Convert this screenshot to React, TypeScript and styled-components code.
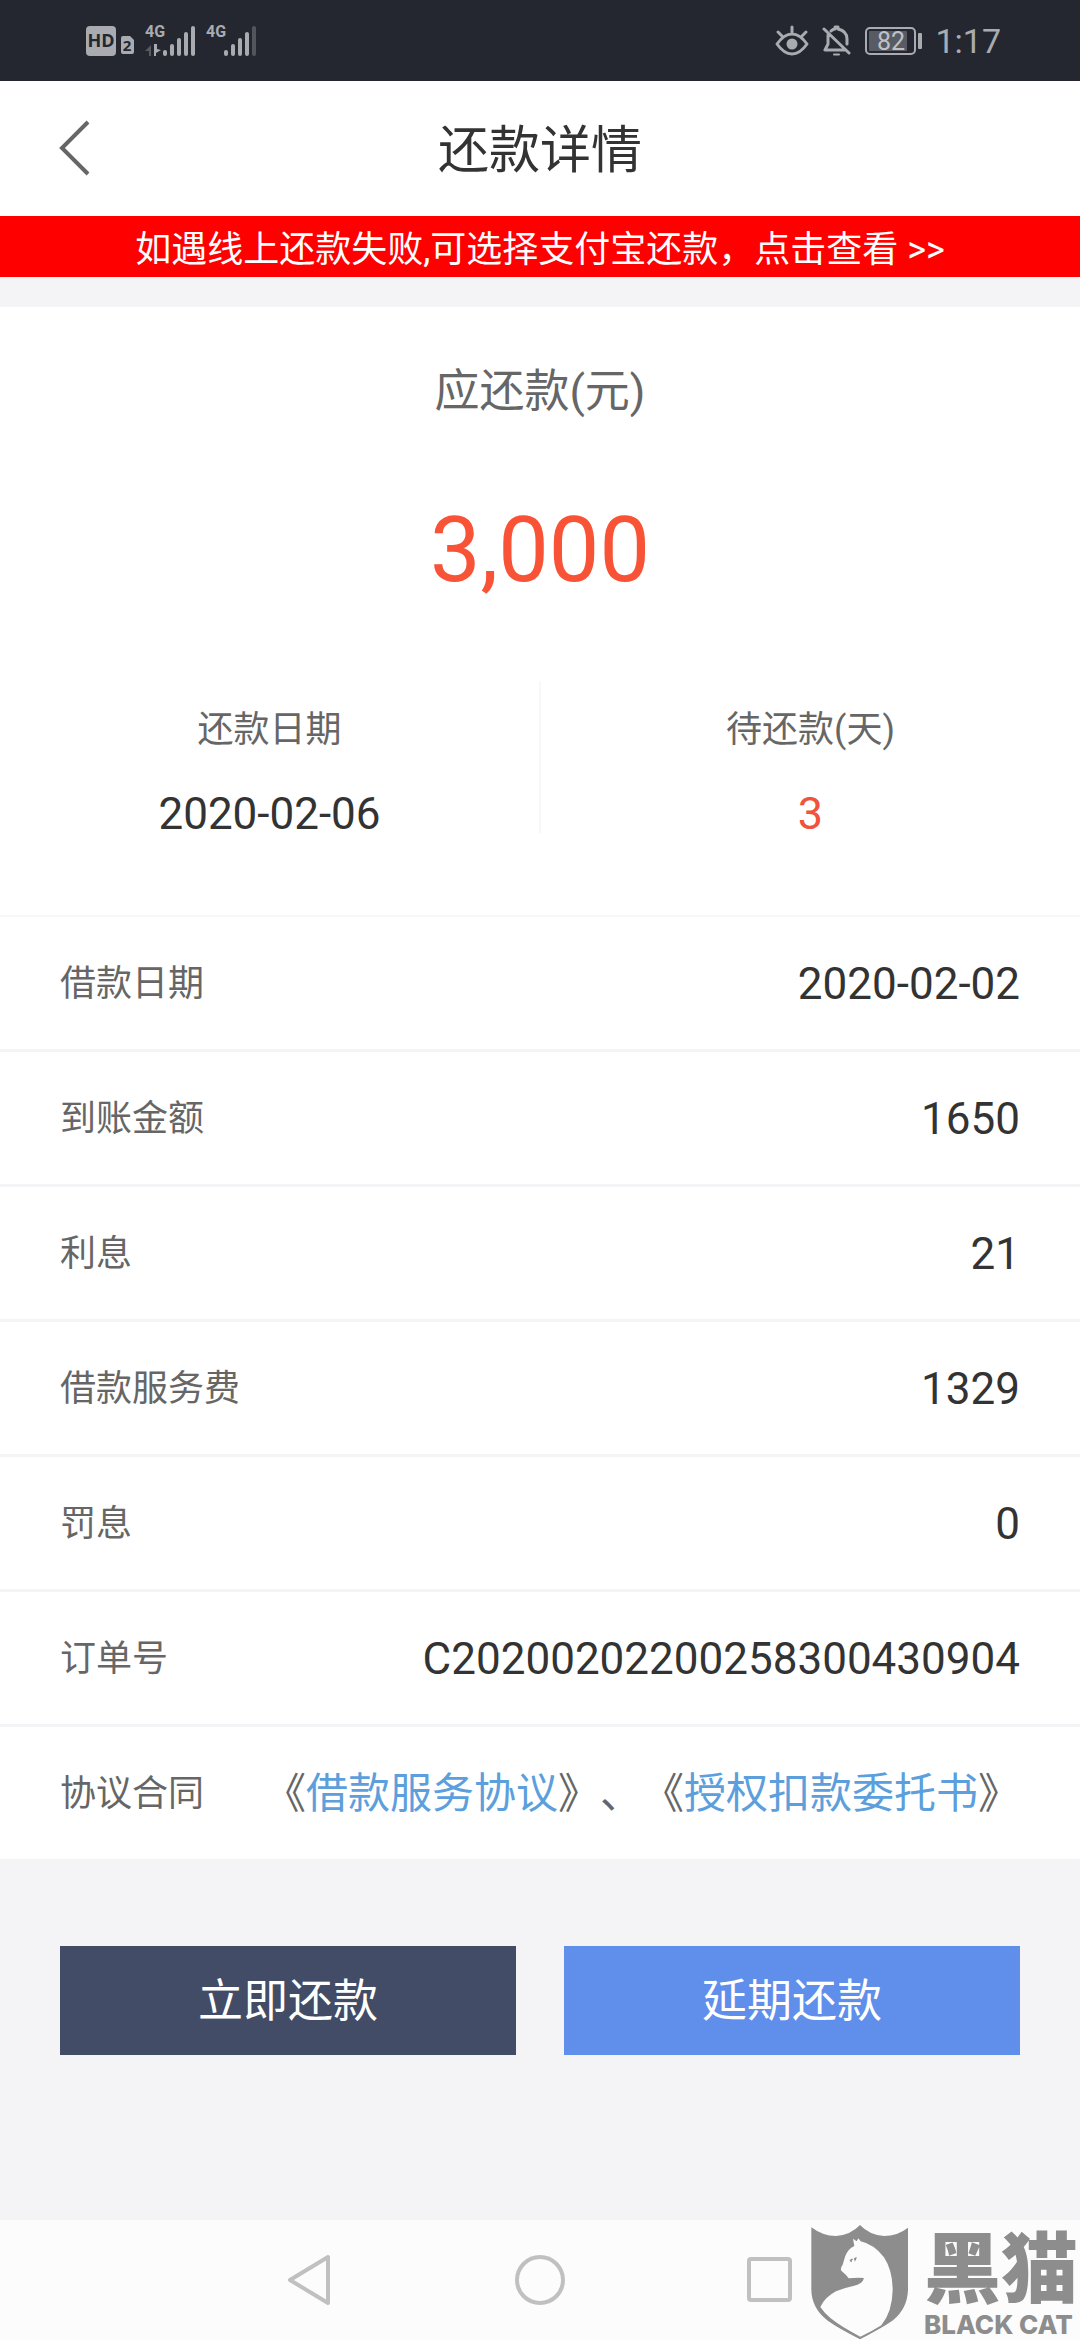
import React from "react";
import styled, { createGlobalStyle } from "styled-components";

const GlobalStyle = createGlobalStyle`
  * { box-sizing: border-box; }
  body {
    margin: 0;
    background: #f4f4f7;
    color: #333;
    font-family: Roboto, "Noto Sans CJK SC", sans-serif;
    text-spacing-trim: space-all;
  }
  button { font-family: inherit; border: 0; padding: 0; background: none; cursor: pointer; }
  svg { display: block; }
`;

const Screen = styled.div`
  position: relative;
  display: flex;
  flex-direction: column;
  min-height: 100vh;
`;

const StatusBar = styled.div`
  display: flex;
  justify-content: space-between;
  align-items: center;
  height: 81px;
  padding: 0 79px 0 86px;
  background: #242730;
  color: #a9abb1;
`;

const StatusGroup = styled.div<{ $gap: number }>`
  display: flex;
  align-items: center;
  gap: ${(p) => p.$gap}px;
`;

const Clock = styled.span`
  font-size: 34px;
  line-height: 40px;
`;

const TopBar = styled.header`
  display: grid;
  grid-template-columns: 150px 1fr 150px;
  align-items: center;
  height: 135px;
  background: #fff;
`;

const BackButton = styled.button`
  display: flex;
  align-items: center;
  height: 135px;
  padding-left: 58px;
`;

const Title = styled.h1`
  margin: 0;
  padding-top: 5px;
  font-size: 51px;
  line-height: 60px;
  font-weight: 400;
  text-align: center;
`;

const Notice = styled.a`
  display: block;
  height: 61px;
  background: #f00;
  color: #fff;
  font-size: 36px;
  line-height: 68px;
  text-align: center;
  text-decoration: none;
`;

const Card = styled.main`
  margin-top: 30px;
  background: #fff;
`;

const Summary = styled.section`
  display: flex;
  flex-direction: column;
  align-items: center;
  padding: 55px 0 76px;
  gap: 75px;
`;

const SummaryLabel = styled.div`
  color: #666;
  font-size: 45px;
  line-height: 60px;
`;

const Amount = styled.div`
  color: #f85336;
  font-size: 90px;
  line-height: 108px;
`;

const Split = styled.section`
  display: grid;
  grid-template-columns: 1fr 2px 1fr;
  padding-bottom: 74px;
  border-bottom: 2px solid #f7f7f8;
`;

const SplitRule = styled.div`
  height: 152px;
  background: #f8f8f9;
`;

const SplitCell = styled.div`
  display: flex;
  flex-direction: column;
  align-items: center;
  gap: 30px;
  padding-top: 22px;
`;

const FieldLabel = styled.span`
  color: #666;
  font-size: 36px;
  line-height: 54px;
`;

const FieldValue = styled.span<{ $accent?: boolean }>`
  color: ${(p) => (p.$accent ? "#f0533b" : "#333")};
  font-size: ${(p) => (p.$accent ? 45 : 44)}px;
  line-height: 54px;
`;

const Details = styled.dl`
  margin: 0;
`;

const Row = styled.div`
  display: flex;
  justify-content: space-between;
  align-items: center;
  height: 135px;
  padding: 2px 60px 0;
  border-bottom: 3px solid #f4f4f7;
  &:last-child { height: 132px; border-bottom: 0; }
  dt, dd { display: flex; margin: 0; }
`;

const Agreements = styled.span`
  color: #666;
  font-size: 42px;
  line-height: 54px;
  white-space: nowrap;
`;

const AgreementLink = styled.a`
  color: #5c9fdc;
  text-decoration: none;
`;

const Actions = styled.div`
  display: grid;
  grid-template-columns: 1fr 1fr;
  gap: 48px;
  padding: 87px 60px;
`;

const ActionButton = styled.button<{ $tone: string }>`
  height: 109px;
  padding-top: 3px;
  background: ${(p) => p.$tone};
  color: #fff;
  font-size: 45px;
  line-height: 60px;
`;

const NavBar = styled.nav`
  display: flex;
  justify-content: center;
  margin-top: auto;
  height: 120px;
  background: #fcfcfc;
`;

const NavButton = styled.button`
  display: grid;
  place-items: center;
  width: 230px;
  height: 120px;
`;

const Watermark = styled.div`
  position: absolute;
  right: 0;
  bottom: 0;
  display: flex;
  align-items: flex-end;
  gap: 14px;
  color: #8e8d8d;
`;

const WatermarkText = styled.div`
  display: flex;
  flex-direction: column;
  width: 156px;
`;

const WatermarkName = styled.span`
  font-family: "Noto Sans CJK SC", sans-serif;
  font-weight: 900;
  font-size: 77px;
  line-height: 92px;
`;

const WatermarkLatin = styled.span`
  font-family: Inter, sans-serif;
  font-weight: 800;
  font-size: 26px;
  line-height: 30px;
  white-space: nowrap;
`;

const HdIcon = () => (
  <svg width="49" height="32" viewBox="0 0 49 32" fill="#a9abb1">
    <rect y="1" width="30" height="30" rx="4" />
    <text x="15" y="22" fontSize="18" fontWeight="700" textAnchor="middle" fill="#242730" fontFamily="Open Sans, sans-serif">HD</text>
    <path d="M37 11h7l4 4v12q0 2-2 2h-9q-2 0-2-2V13q0-2 2-2z" />
    <text x="41" y="26" fontSize="15" fontWeight="700" textAnchor="middle" fill="#242730" fontFamily="Open Sans, sans-serif">2</text>
  </svg>
);

const Signal = ({ strength, data }: { strength: number; data?: boolean }) => (
  <svg width="51" height="48" viewBox="0 -8 51 48" fill="#a9abb1">
    <text x="0" y="12" fontSize="16" fontWeight="700" fontFamily="Roboto, sans-serif">4G</text>
    {data && (
      <g>
        <path d="M0 26l6-6v11H4v-5z" opacity=".4" />
        <path d="M9 19v12h2v-3l5-3-4-1v-5z" />
      </g>
    )}
    {[6, 12, 18, 24, 30].map((h, i) => (
      <rect key={h} x={18 + i * 7} y={31 - h} width="4" height={h} rx="2" opacity={i < strength ? 1 : 0.35} />
    ))}
  </svg>
);

const EyeIcon = () => (
  <svg width="34" height="32" viewBox="0 0 34 32" fill="none" stroke="#a9abb1" strokeWidth="3" strokeLinecap="round">
    <path d="M2 19Q9 9 17 9T32 19Q25 29 17 29T2 19z" strokeLinejoin="round" />
    <circle cx="17" cy="19" r="5.5" fill="#a9abb1" stroke="none" />
    <path d="M17 2v5M3 7l4 4M31 7l-4 4" />
  </svg>
);

const MuteIcon = () => (
  <svg width="30" height="32" viewBox="0 0 30 32" fill="none" stroke="#a9abb1" strokeWidth="3" strokeLinecap="round" strokeLinejoin="round">
    <path d="M2 4l25 24M6 10v9l-3 6h19M9 6q2-2 4-2V2h3v2q9 2 9 10v5" />
    <path d="M12 29.5h5" strokeWidth="2" />
  </svg>
);

const BatteryIcon = () => (
  <svg width="57" height="32" viewBox="0 0 57 32">
    <rect x="1" y="3" width="49" height="26" rx="4" fill="none" stroke="#a9abb1" strokeWidth="2" />
    <rect x="4" y="6" width="38" height="20" rx="1" fill="#585b63" />
    <rect x="53" y="8" width="4" height="16" rx="1" fill="#a9abb1" />
    <text x="26" y="25" textAnchor="middle" fontSize="25" fill="#bfc1c6" fontFamily="Roboto, sans-serif">82</text>
  </svg>
);

const CatShield = () => (
  <svg width="100" height="117" viewBox="90 69 300 351" aria-hidden="true">
    <path fill="#8e8d8d" d="M94 82Q128 108 168 108Q212 105 240 75Q268 105 312 108Q352 108 384 83V270Q382 325 340 360Q318 377 240 418Q160 377 138 358Q95 322 94 270z" />
    <path fill="#fcfcfc" d="M219 116L230 124L235 115L242 124Q282 133 312 172Q338 212 338 270Q337 335 304 376Q278 393 241 410Q186 382 152 355Q132 338 121 321Q134 292 168 274Q190 264 220 258Q248 252 252 234Q232 232 206 235L198 225L184 212Q180 205 188 194L195 170Q203 147 223 138z" />
    <path fill="#8e8d8d" d="M209 181q4-7 11-4q-6 2-5 10q-5-1-6-6zM221 176q7-6 9-5q0 10-7 14q3-5-2-9z" />
  </svg>
);

const rows: [string, string][] = [
  ["借款日期", "2020-02-02"],
  ["到账金额", "1650"],
  ["利息", "21"],
  ["借款服务费", "1329"],
  ["罚息", "0"],
  ["订单号", "C20200202200258300430904"],
];

export default function App() {
  return (
    <Screen>
      <GlobalStyle />
      <StatusBar>
        <StatusGroup $gap={10}>
          <HdIcon />
          <Signal strength={5} data />
          <Signal strength={4} />
        </StatusGroup>
        <StatusGroup $gap={13}>
          <EyeIcon />
          <MuteIcon />
          <BatteryIcon />
          <Clock>1:17</Clock>
        </StatusGroup>
      </StatusBar>
      <TopBar>
        <BackButton aria-label="返回">
          <svg width="34" height="58" viewBox="0 0 34 58" fill="none" stroke="#666" strokeWidth="4">
            <path d="M30 2L4 28L30 54" />
          </svg>
        </BackButton>
        <Title>还款详情</Title>
      </TopBar>
      <Notice href="#alipay">如遇线上还款失败,可选择支付宝还款，点击查看 &gt;&gt;</Notice>
      <Card>
        <Summary>
          <SummaryLabel>应还款(元)</SummaryLabel>
          <Amount>3,000</Amount>
        </Summary>
        <Split>
          <SplitCell>
            <FieldLabel>还款日期</FieldLabel>
            <FieldValue>2020-02-06</FieldValue>
          </SplitCell>
          <SplitRule />
          <SplitCell>
            <FieldLabel>待还款(天)</FieldLabel>
            <FieldValue $accent>3</FieldValue>
          </SplitCell>
        </Split>
        <Details>
          {rows.map(([label, value]) => (
            <Row key={label}>
              <dt><FieldLabel>{label}</FieldLabel></dt>
              <dd><FieldValue>{value}</FieldValue></dd>
            </Row>
          ))}
          <Row>
            <dt><FieldLabel>协议合同</FieldLabel></dt>
            <dd>
              <Agreements>
                《<AgreementLink href="#service">借款服务协议</AgreementLink>》、《<AgreementLink href="#debit">授权扣款委托书</AgreementLink>》
              </Agreements>
            </dd>
          </Row>
        </Details>
      </Card>
      <Actions>
        <ActionButton $tone="#424c66">立即还款</ActionButton>
        <ActionButton $tone="#5f8eeb">延期还款</ActionButton>
      </Actions>
      <NavBar>
        <NavButton aria-label="后退">
          <svg width="50" height="54" viewBox="0 0 50 54" fill="none" stroke="#c0c0c0" strokeWidth="4" strokeLinejoin="round">
            <path d="M5 27L43 4V50z" />
          </svg>
        </NavButton>
        <NavButton aria-label="主页">
          <svg width="54" height="54" viewBox="0 0 54 54" fill="none" stroke="#c0c0c0" strokeWidth="4">
            <circle cx="27" cy="27" r="23" />
          </svg>
        </NavButton>
        <NavButton aria-label="最近任务">
          <svg width="54" height="54" viewBox="0 0 54 54" fill="none" stroke="#c0c0c0" strokeWidth="4">
            <rect x="6" y="6" width="41" height="41" rx="2" />
          </svg>
        </NavButton>
      </NavBar>
      <Watermark>
        <CatShield />
        <WatermarkText>
          <WatermarkName>黑猫</WatermarkName>
          <WatermarkLatin>BLACK CAT</WatermarkLatin>
        </WatermarkText>
      </Watermark>
    </Screen>
  );
}
